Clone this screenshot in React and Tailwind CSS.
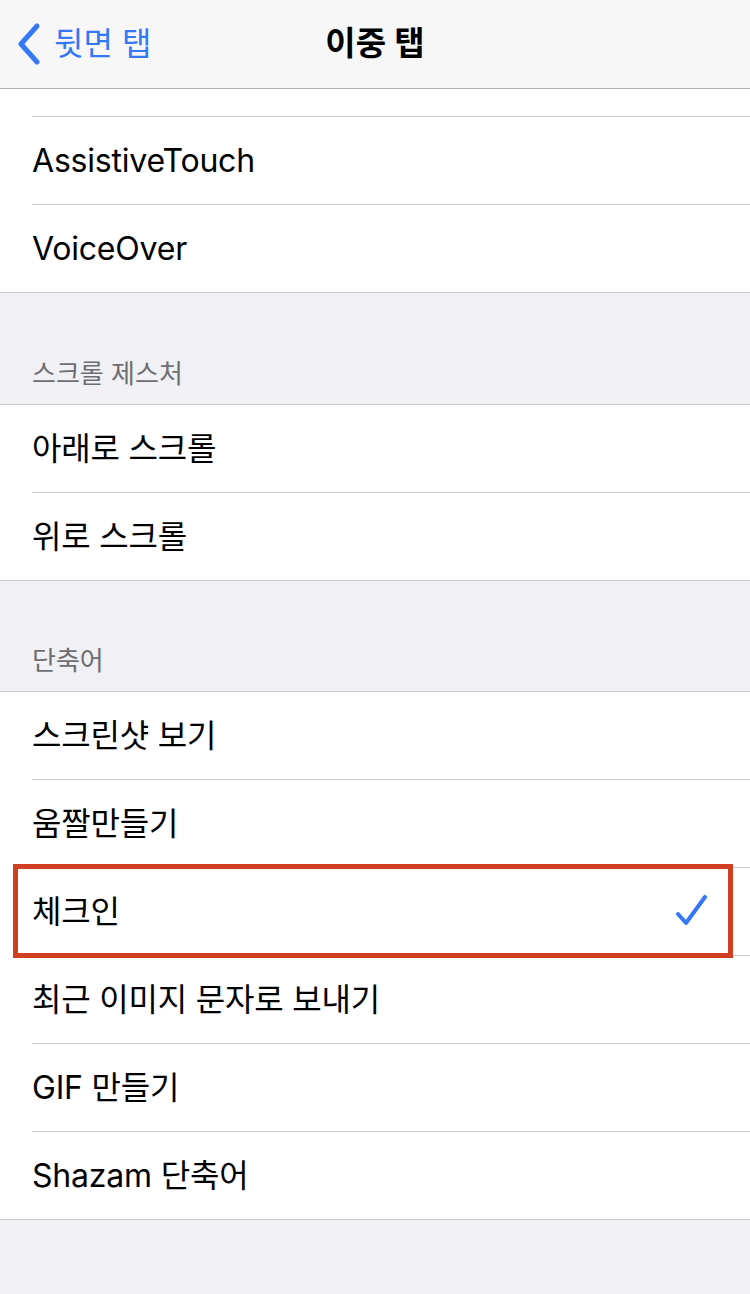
const font = "font-['Inter','Noto_Sans_CJK_KR',sans-serif]";

const Row = ({ label, checked, last }) => (
  <div className={`flex h-[88px] items-center ${last ? "border-b border-[#c8c7cc]" : "pl-[32px]"}`}>
    <div
      className={`flex h-full flex-1 items-center pr-[41px] ${
        last ? "pl-[32px]" : "border-b border-[#c8c7cc]"
      }`}
    >
      <span className="flex-1 text-[32px] tracking-[-0.2px] text-black">{label}</span>
      {checked && (
        <svg width="34" height="34" viewBox="0 0 34 34" fill="none">
          <path
            d="M3 19 L11 28 L30 2"
            stroke="#3478f6"
            strokeWidth="4"
            strokeLinecap="round"
            strokeLinejoin="round"
          />
        </svg>
      )}
    </div>
  </div>
);

const Group = ({ items }) => (
  <div className="border-t border-[#c8c7cc] bg-white">
    {items.map((it, i) => (
      <Row key={it.label} {...it} last={i === items.length - 1} />
    ))}
  </div>
);

const Header = ({ title, tall }) => (
  <div className={`flex items-end px-[32px] pb-[11px] ${tall ? "h-[111px]" : "h-[110px]"}`}>
    <span className="text-[26px] text-[#6d6d72]">{title}</span>
  </div>
);

export default function App() {
  return (
    <div className={`${font} relative min-h-[1294px] w-[750px] bg-[#f0f0f5]`}>
      {/* nav bar */}
      <div className="relative flex h-[89px] items-center border-b border-[#b2b2b2] bg-[#f7f7f7]">
        <div className="flex items-center pl-[16px]">
          <svg width="26" height="42" viewBox="0 0 26 42" fill="none">
            <path
              d="M21 3 L5 21 L21 39"
              stroke="#3478f6"
              strokeWidth="5"
              strokeLinecap="round"
              strokeLinejoin="round"
            />
          </svg>
          <span className="ml-[12px] text-[32px] text-[#3478f6]">뒷면 탭</span>
        </div>
        <div className="absolute inset-x-0 text-center text-[33px] font-semibold text-black">
          이중 탭
        </div>
      </div>

      <div className="bg-white">
        <div className="ml-[32px] h-[28px] border-b border-[#c8c7cc]" />
        <Row label="AssistiveTouch" />
        <Row label="VoiceOver" last />
      </div>

      <Header title="스크롤 제스처" tall />
      <Group items={[{ label: "아래로 스크롤" }, { label: "위로 스크롤" }]} />

      <Header title="단축어" />
      <Group
        items={[
          { label: "스크린샷 보기" },
          { label: "움짤만들기" },
          { label: "체크인", checked: true },
          { label: "최근 이미지 문자로 보내기" },
          { label: "GIF 만들기" },
          { label: "Shazam 단축어" },
        ]}
      />

      {/* annotation box */}
      <div className="pointer-events-none absolute left-[13px] top-[864px] h-[94px] w-[720px] border-[5px] border-[#d13f22]" />
    </div>
  );
}
